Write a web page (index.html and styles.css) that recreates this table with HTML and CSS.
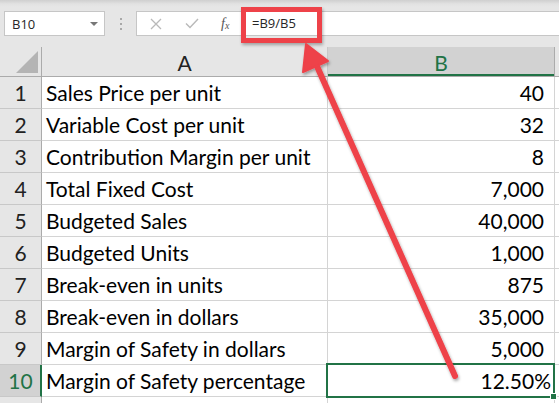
FILE: index.html
```html
<!DOCTYPE html>
<html>
<head>
<meta charset="utf-8">
<link rel="stylesheet" href="styles.css">
</head>
<body>
<div class="page">
  <div class="toolbar">
    <div class="namebox"><span class="nb-text">B10</span><span class="nb-arrow"></span></div>
    <div class="dots"><i></i><i></i><i></i></div>
    <div class="fbuttons">
      <svg class="ico-x" width="12" height="12" viewBox="0 0 12 12"><path d="M1 1L11 11M11 1L1 11" stroke="#b9b9b9" stroke-width="1.3" fill="none"/></svg>
      <svg class="ico-check" width="14" height="11" viewBox="0 0 14 11"><path d="M1 5.5L5 9.5L13 1" stroke="#b9b9b9" stroke-width="1.4" fill="none"/></svg>
      <span class="fx">f<sub>x</sub></span>
    </div>
    <div class="finput">=B9/B5</div>
  </div>
  <div class="sheet">
    <div class="corner"><span class="tri"></span></div>
    <div class="colhead">A</div>
    <div class="colhead sel">B</div>
    <div class="colhead blank"></div>

    <div class="rowhead">1</div><div class="cell">Sales Price per unit</div><div class="cell num">40</div><div class="cell c"></div>
    <div class="rowhead">2</div><div class="cell">Variable Cost per unit</div><div class="cell num">32</div><div class="cell c"></div>
    <div class="rowhead">3</div><div class="cell">Contribution Margin per unit</div><div class="cell num">8</div><div class="cell c"></div>
    <div class="rowhead">4</div><div class="cell">Total Fixed Cost</div><div class="cell num">7,000</div><div class="cell c"></div>
    <div class="rowhead">5</div><div class="cell">Budgeted Sales</div><div class="cell num">40,000</div><div class="cell c"></div>
    <div class="rowhead">6</div><div class="cell">Budgeted Units</div><div class="cell num">1,000</div><div class="cell c"></div>
    <div class="rowhead">7</div><div class="cell">Break-even in units</div><div class="cell num">875</div><div class="cell c"></div>
    <div class="rowhead">8</div><div class="cell">Break-even in dollars</div><div class="cell num">35,000</div><div class="cell c"></div>
    <div class="rowhead">9</div><div class="cell">Margin of Safety in dollars</div><div class="cell num">5,000</div><div class="cell c"></div>
    <div class="rowhead sel">10</div><div class="cell">Margin of Safety percentage</div><div class="cell num pct active"><span class="selbox"><span class="handle"></span></span>12.50%</div><div class="cell c"></div>
    <div class="rowhead"></div><div class="cell"></div><div class="cell"></div><div class="cell c"></div>
  </div>
  <div class="redbox"></div>
  <svg class="arrow" width="559" height="403" viewBox="0 0 559 403">
    <defs>
      <filter id="sh" x="-20%" y="-20%" width="140%" height="140%">
        <feDropShadow dx="1" dy="2" stdDeviation="1.5" flood-color="#000" flood-opacity="0.35"/>
      </filter>
    </defs>
    <g filter="url(#sh)">
      <line x1="455" y1="376" x2="316" y2="64" stroke="#ee4249" stroke-width="6" stroke-linecap="round"/>
      <polygon points="306,44 328,61 303,72" fill="#ee4249" stroke="#ee4249" stroke-width="2" stroke-linejoin="round"/>
    </g>
  </svg>
</div>
</body>
</html>
```
FILE: styles.css
```css
html, body {
  margin: 0;
  padding: 0;
  background: #ffffff;
}
.page {
  position: relative;
  width: 559px;
  height: 403px;
  overflow: hidden;
  font-family: Lato, "Open Sans", sans-serif;
}
.toolbar {
  height: 47px;
  box-sizing: border-box;
  padding-top: 11px;
  display: flex;
  align-items: flex-start;
  background: linear-gradient(#cfcfcf 0px, #e2e2e2 4px, #e6e6e6 7px, #e6e6e6 100%);
}
.namebox {
  margin-left: 4px;
  width: 101px;
  height: 25px;
  box-sizing: border-box;
  border: 1px solid #c6c6c6;
  background: #ffffff;
  display: flex;
  align-items: center;
  justify-content: space-between;
  padding: 0 6px 0 7px;
}
.nb-text, .finput {
  font-family: "Open Sans", "Noto Sans", sans-serif;
  font-size: 13px;
  color: #262626;
}
.nb-arrow {
  width: 0;
  height: 0;
  border-left: 4px solid transparent;
  border-right: 4px solid transparent;
  border-top: 4px solid #777777;
}
.dots {
  width: 2px;
  margin: 7px 14px 0 15px;
  display: flex;
  flex-direction: column;
  gap: 3px;
}
.dots i {
  display: block;
  width: 2px;
  height: 2px;
  background: #a8a8a8;
}
.fbuttons {
  width: 106px;
  height: 25px;
  box-sizing: border-box;
  border: 1px solid #c6c6c6;
  border-right: none;
  background: #ffffff;
  display: flex;
  align-items: center;
  padding-left: 13px;
}
.ico-x { margin-right: 23px; }
.ico-check { margin-right: 22px; }
.fx {
  font-family: "Liberation Serif", serif;
  font-style: italic;
  font-size: 14px;
  color: #555555;
  line-height: 1;
}
.fx sub {
  font-size: 10px;
  vertical-align: -1px;
}
.finput {
  flex: 1;
  height: 25px;
  box-sizing: border-box;
  border: 1px solid #c6c6c6;
  border-right: none;
  background: #ffffff;
  padding-left: 9px;
  line-height: 23px;
}
.sheet {
  display: grid;
  grid-template-columns: 42px 286px 227px 1fr;
  grid-template-rows: 30px repeat(10, 32px) 32px;
}
.corner, .colhead, .rowhead {
  background: #e6e6e6;
  box-sizing: border-box;
  border-right: 1px solid #ababab;
  border-bottom: 1px solid #ababab;
}
.corner {
  position: relative;
}
.tri {
  position: absolute;
  right: 3px;
  bottom: 3px;
  width: 0;
  height: 0;
  border-left: 22px solid transparent;
  border-bottom: 22px solid #b4b4b4;
}
.colhead {
  display: flex;
  align-items: center;
  justify-content: center;
  font-size: 21px;
  color: #222222;
  border-right-color: #c8c8c8;
  padding-top: 1px;
}
.colhead.sel {
  background: #d2d2d2;
  color: #217346;
  box-shadow: inset 0 -2px 0 #217346;
  border-right-color: #ababab;
}
.colhead.blank {
  border-right: none;
}
.rowhead {
  display: flex;
  align-items: flex-end;
  justify-content: center;
  padding-bottom: 3px;
  font-size: 21px;
  color: #222222;
  border-bottom-color: #c8c8c8;
}
.rowhead.sel {
  background: #d2d2d2;
  color: #217346;
  border-right: 2px solid #217346;
  padding-left: 1px;
}
.cell {
  box-sizing: border-box;
  border-right: 1px solid #d4d4d4;
  border-bottom: 1px solid #d4d4d4;
  font-size: 21px;
  color: #000000;
  display: flex;
  align-items: flex-end;
  padding: 0 4px 3px 4px;
  white-space: nowrap;
}
.cell.num {
  justify-content: flex-end;
  padding-right: 10px;
}
.cell.pct {
  padding-right: 3px;
}
.cell.c {
  border-right: none;
}
.active {
  position: relative;
}
.selbox {
  position: absolute;
  left: -2px;
  top: -2px;
  right: -1px;
  bottom: -2px;
  border: 2px solid #217346;
}
.handle {
  position: absolute;
  right: -4px;
  bottom: -4px;
  width: 5px;
  height: 5px;
  background: #217346;
  border: 1px solid #ffffff;
}
.redbox {
  position: absolute;
  left: 241px;
  top: 7px;
  width: 81px;
  height: 36px;
  box-sizing: border-box;
  border: 5px solid #ee4249;
  box-shadow: 1px 2px 3px rgba(0, 0, 0, 0.3);
}
.arrow {
  position: absolute;
  left: 0;
  top: 0;
  pointer-events: none;
}
```
